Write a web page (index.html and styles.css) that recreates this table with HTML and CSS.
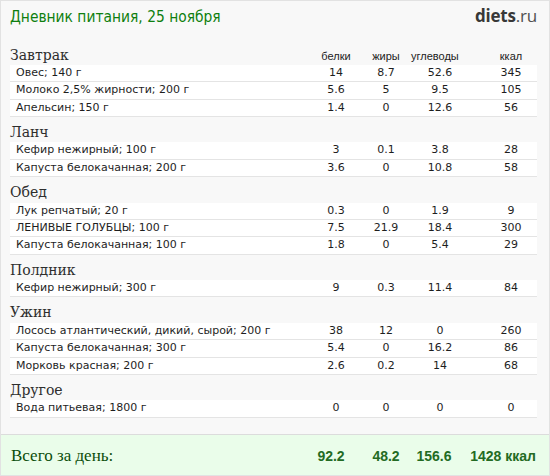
FILE: index.html
```html
<!DOCTYPE html>
<html lang="ru">
<head>
<meta charset="utf-8">
<title>Дневник питания</title>
<link rel="stylesheet" href="styles.css">
</head>
<body>
<div class="page">
  <div class="top">
    <h1 class="title">Дневник питания, 25 ноября</h1>
    <div class="logo">diets<span class="logo-ru">.ru</span></div>
  </div>

  <section class="meal">
    <div class="meal-head">
      <h2 class="meal-name">Завтрак</h2>
      <span class="col-h">белки</span><span class="col-h">жиры</span><span class="col-h col-h-carb">углеводы</span><span class="col-h col-h-kcal">ккал</span>
    </div>
    <div class="row"><span class="name">Овес; 140 г</span><span class="num">14</span><span class="num">8.7</span><span class="num">52.6</span><span class="num kcal">345</span></div>
    <div class="row"><span class="name">Молоко 2,5% жирности; 200 г</span><span class="num">5.6</span><span class="num">5</span><span class="num">9.5</span><span class="num kcal">105</span></div>
    <div class="row"><span class="name">Апельсин; 150 г</span><span class="num">1.4</span><span class="num">0</span><span class="num">12.6</span><span class="num kcal">56</span></div>
  </section>

  <section class="meal">
    <div class="meal-head"><h2 class="meal-name">Ланч</h2></div>
    <div class="row"><span class="name">Кефир нежирный; 100 г</span><span class="num">3</span><span class="num">0.1</span><span class="num">3.8</span><span class="num kcal">28</span></div>
    <div class="row"><span class="name">Капуста белокачанная; 200 г</span><span class="num">3.6</span><span class="num">0</span><span class="num">10.8</span><span class="num kcal">58</span></div>
  </section>

  <section class="meal">
    <div class="meal-head"><h2 class="meal-name">Обед</h2></div>
    <div class="row"><span class="name">Лук репчатый; 20 г</span><span class="num">0.3</span><span class="num">0</span><span class="num">1.9</span><span class="num kcal">9</span></div>
    <div class="row"><span class="name">ЛЕНИВЫЕ ГОЛУБЦЫ; 100 г</span><span class="num">7.5</span><span class="num">21.9</span><span class="num">18.4</span><span class="num kcal">300</span></div>
    <div class="row"><span class="name">Капуста белокачанная; 100 г</span><span class="num">1.8</span><span class="num">0</span><span class="num">5.4</span><span class="num kcal">29</span></div>
  </section>

  <section class="meal">
    <div class="meal-head"><h2 class="meal-name">Полдник</h2></div>
    <div class="row"><span class="name">Кефир нежирный; 300 г</span><span class="num">9</span><span class="num">0.3</span><span class="num">11.4</span><span class="num kcal">84</span></div>
  </section>

  <section class="meal">
    <div class="meal-head"><h2 class="meal-name">Ужин</h2></div>
    <div class="row"><span class="name">Лосось атлантический, дикий, сырой; 200 г</span><span class="num">38</span><span class="num">12</span><span class="num">0</span><span class="num kcal">260</span></div>
    <div class="row"><span class="name">Капуста белокачанная; 300 г</span><span class="num">5.4</span><span class="num">0</span><span class="num">16.2</span><span class="num kcal">86</span></div>
    <div class="row"><span class="name">Морковь красная; 200 г</span><span class="num">2.6</span><span class="num">0.2</span><span class="num">14</span><span class="num kcal">68</span></div>
  </section>

  <section class="meal">
    <div class="meal-head"><h2 class="meal-name">Другое</h2></div>
    <div class="row"><span class="name">Вода питьевая; 1800 г</span><span class="num">0</span><span class="num">0</span><span class="num">0</span><span class="num kcal">0</span></div>
  </section>

  <div class="total">
    <span class="total-label">Всего за день:</span>
    <span class="tnum tnum-p">92.2</span>
    <span class="tnum tnum-f">48.2</span>
    <span class="tnum tnum-c">156.6</span>
    <span class="tnum tnum-k">1428 ккал</span>
  </div>
</div>
</body>
</html>
```

FILE: styles.css
```css
html, body {
  margin: 0;
  padding: 0;
  background: #ffffff;
}

.page {
  width: 550px;
  height: 476px;
  box-sizing: border-box;
  border: 1px solid #e2e2e2;
  background: #f8f8f8;
  display: flex;
  flex-direction: column;
  overflow: hidden;
}

.top {
  display: flex;
  justify-content: space-between;
  align-items: baseline;
  padding: 5px 12px 0 9px;
  height: 20px;
  margin-bottom: 13.5px;
}

.title {
  margin: 0;
  font-family: "DejaVu Sans Condensed", "DejaVu Sans", sans-serif;
  font-stretch: condensed;
  font-weight: normal;
  font-size: 15.4px;
  line-height: 20px;
  color: #0f7f0f;
}

.logo {
  font-family: "Open Sans", "DejaVu Sans", sans-serif;
  font-weight: 700;
  font-size: 17px;
  line-height: 20px;
  color: #383838;
  letter-spacing: -0.2px;
}

.logo-ru {
  font-weight: 400;
  color: #505050;
}

.meal {
  margin: 6px 12px 0 9px;
}

.meal-head {
  display: grid;
  grid-template-columns: 1fr 50px 50px 58px 68px;
  align-items: baseline;
  height: 19.5px;
}

.meal-name {
  margin: 0;
  font-family: "DejaVu Serif", serif;
  font-weight: normal;
  font-size: 14px;
  line-height: 19.5px;
  color: #2e2e2e;
}

.col-h {
  font-family: "Liberation Sans", Arial, sans-serif;
  font-size: 11px;
  color: #222;
  text-align: center;
}

.col-h-carb {
  padding-right: 16px;
}

.col-h-kcal {
  padding-left: 16px;
}

.row {
  display: grid;
  grid-template-columns: 1fr 50px 50px 58px 68px;
  height: 17.33px;
  box-sizing: border-box;
  border-bottom: 1px solid #e4e4e4;
  background: #ffffff;
  font-family: "DejaVu Sans", sans-serif;
  font-size: 11px;
  line-height: 16.33px;
  color: #1e1e1e;
}

.name {
  padding-left: 6px;
  white-space: nowrap;
}

.num {
  text-align: center;
}

.kcal {
  padding-left: 16px;
}

.total {
  margin-top: 16px;
  flex: 1;
  border-top: 1px solid #dcdcdc;
  background: #eafdea;
  display: grid;
  grid-template-columns: 1fr 50px 50px 58px 68px;
  align-items: baseline;
  padding: 0 12px 0 9px;
}

.total-label {
  padding-left: 1px;
  padding-top: 11px;
  font-family: "Liberation Serif", serif;
  font-size: 17px;
  line-height: 20px;
  color: #0b4d0b;
}

.tnum {
  font-family: "Liberation Sans Narrow", "Arial Narrow", "Liberation Sans", sans-serif;
  font-weight: bold;
  font-size: 14px;
  color: #236b23;
  text-align: center;
}

.tnum-p {
  padding-right: 10px;
}

.tnum-c {
  padding-right: 12px;
}

.tnum-k {
  text-align: right;
  white-space: nowrap;
  padding-right: 1px;
}
```
